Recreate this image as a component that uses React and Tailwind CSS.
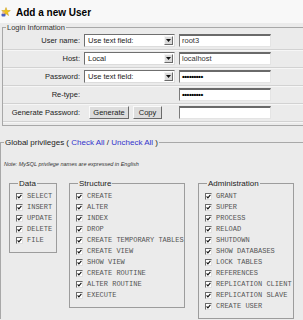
import React from 'react'

const DATA = ['SELECT', 'INSERT', 'UPDATE', 'DELETE', 'FILE']
const STRUCTURE = [
  'CREATE', 'ALTER', 'INDEX', 'DROP', 'CREATE TEMPORARY TABLES',
  'CREATE VIEW', 'SHOW VIEW', 'CREATE ROUTINE', 'ALTER ROUTINE', 'EXECUTE',
]
const ADMIN = [
  'GRANT', 'SUPER', 'PROCESS', 'RELOAD', 'SHUTDOWN', 'SHOW DATABASES',
  'LOCK TABLES', 'REFERENCES', 'REPLICATION CLIENT', 'REPLICATION SLAVE', 'CREATE USER',
]

const sans = { fontFamily: '"Liberation Sans", Arial, sans-serif' }

function UserIcon() {
  return (
    <svg width="10" height="10" viewBox="0 0 10 10">
      <path d="M5 0.5 L6 3.5 L9.3 3.6 L6.6 5.5 L7.6 8.6 L5 6.7 L2.4 8.6 L3.4 5.5 L0.7 3.6 L4 3.5 Z" fill="#f0c419" stroke="#c89a10" strokeWidth="0.5" />
      <rect x="0.5" y="6.5" width="4" height="3" rx="1" fill="#4a5fc1" />
      <circle cx="2.5" cy="5.8" r="1.2" fill="#e9b48a" />
    </svg>
  )
}

function Select({ value }) {
  return (
    <div className="flex h-[13px] w-[91px] items-stretch border border-t-[#6f6f6f] border-l-[#6f6f6f] border-r-[#dcdcdc] border-b-[#dcdcdc] bg-white">
      <span className="flex-1 pl-[3px] text-[7.5px] leading-[11px] text-[#222]">{value}</span>
      <span className="m-[1px] flex w-[9px] items-center justify-center border border-t-[#f4f4f4] border-l-[#f4f4f4] border-r-[#6a6a6a] border-b-[#6a6a6a] bg-[#dadada]">
        <svg width="5" height="3" viewBox="0 0 5 3"><path d="M0 0 H5 L2.5 3 Z" fill="#111" /></svg>
      </span>
    </div>
  )
}

function TextInput({ value, pw }) {
  return (
    <div className="flex h-[13px] w-[92px] items-center border-t-2 border-l border-t-[#6a6a6a] border-l-[#7a7a7a] border-r border-b border-r-[#e4e4e4] border-b-[#e4e4e4] bg-white pl-[2px]">
      {pw ? (
        <span className="text-[8px] font-bold leading-[8px] tracking-[-0.5px] text-black">{value}</span>
      ) : (
        <span className="text-[7.5px] leading-[10px] text-[#333]">{value}</span>
      )}
    </div>
  )
}

function Button({ children, w }) {
  return (
    <div className={`flex h-[13px] ${w} items-center justify-center border border-t-[#fafafa] border-l-[#fafafa] border-r-[#6a6a6a] border-b-[#6a6a6a] bg-[#dddddd] text-[7.5px] text-[#222]`}>
      {children}
    </div>
  )
}

function Row({ label, children }) {
  return (
    <div className="flex h-[18px] items-center border-b border-b-[#d2d2d2] shadow-[0_1px_0_#f6f6f6]">
      <span className="w-[81px] pr-[4px] text-right text-[7.5px] text-[#222]">{label}</span>
      {children}
    </div>
  )
}

function Check() {
  return (
    <span className="flex h-[7px] w-[7px] items-center justify-center border border-t-[#6a6a6a] border-l-[#6a6a6a] border-r-[#e0e0e0] border-b-[#e0e0e0] bg-white">
      <svg width="5" height="5" viewBox="0 0 5 5"><path d="M0.6 2.4 L1.9 3.8 L4.4 0.8" fill="none" stroke="#111" strokeWidth="1.1" /></svg>
    </span>
  )
}

function Group({ title, items, w }) {
  return (
    <fieldset className={`${w} border border-[#9c9c9c] pb-[6px] pl-[6px]`}>
      <legend className="ml-[2px] px-[1px] text-[8px] leading-[9px] text-[#222]">{title}</legend>
      <div className="flex flex-col pt-[3px]">
        {items.map((it) => (
          <div key={it} className="flex h-[11px] items-center gap-[4px]">
            <Check />
            <span className="whitespace-nowrap text-[7px] leading-[11px] text-[#555]" style={{ fontFamily: '"Liberation Mono", "Courier New", monospace' }}>
              {it}
            </span>
          </div>
        ))}
      </div>
    </fieldset>
  )
}

export default function App() {
  return (
    <div className="h-[320px] w-[303px] overflow-hidden bg-[#ebebeb]" style={sans}>
      <div className="flex h-[23px] items-center gap-[5px] bg-[#f8f8f8] pl-[1px] pt-[1px]">
        <UserIcon />
        <span className="text-[10px] font-bold text-black">Add a new User</span>
      </div>

      <fieldset className="ml-[2px] border-t border-l border-b border-[#a8a8a8] pb-[3px]">
        <legend className="ml-[3px] px-[1px] text-[7.5px] leading-[9px] text-[#333]">Login Information</legend>
        <Row label="User name:">
          <Select value="Use text field:" />
          <span className="w-[4px]" />
          <TextInput value="root3" />
        </Row>
        <Row label="Host:">
          <Select value="Local" />
          <span className="w-[4px]" />
          <TextInput value="localhost" />
        </Row>
        <Row label="Password:">
          <Select value="Use text field:" />
          <span className="w-[4px]" />
          <TextInput value="•••••••••" pw />
        </Row>
        <Row label="Re-type:">
          <span className="w-[95px]" />
          <TextInput value="•••••••••" pw />
        </Row>
        <Row label="Generate Password:">
          <span className="w-[5px]" />
          <Button w="w-[40px]">Generate</Button>
          <span className="w-[4px]" />
          <Button w="w-[29px]">Copy</Button>
          <span className="w-[17px]" />
          <TextInput value="" />
        </Row>
      </fieldset>

      <fieldset className="mt-[12px] border-t border-l border-[#a8a8a8]">
        <legend className="ml-[3px] px-[1px] text-[8px] leading-[9px] text-[#222]">
          Global privileges ( <span className="text-[#3333cc]">Check All</span> / <span className="text-[#3333cc]">Uncheck All</span> )
        </legend>
        <div className="pl-[3px] pt-[13px] text-[5.5px] italic text-[#333]">
          Note: MySQL privilege names are expressed in English
        </div>
        <div className="mt-[11px] flex items-start pl-[8px]">
          <Group title="Data" items={DATA} w="w-[48px]" />
          <span className="w-[12px]" />
          <Group title="Structure" items={STRUCTURE} w="w-[116px]" />
          <span className="w-[13px]" />
          <Group title="Administration" items={ADMIN} w="w-[96px]" />
        </div>
      </fieldset>
    </div>
  )
}
